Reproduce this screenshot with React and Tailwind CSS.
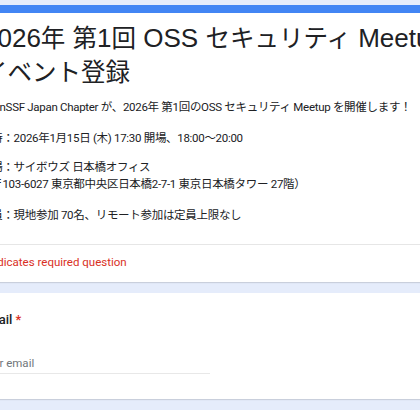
const lines = [
  { text: 'OpenSSF Japan Chapter が、2026年 第1回のOSS セキュリティ Meetup を開催します！', gap: '' },
  { text: '日時：2026年1月15日 (木) 17:30 開場、18:00～20:00', gap: 'mt-[14px]' },
  { text: '会場：サイボウズ 日本橋オフィス', gap: 'mt-[12px]' },
  { text: '（〒103-6027 東京都中央区日本橋2-7-1 東京日本橋タワー 27階）', gap: '' },
  { text: '定員：現地参加 70名、リモート参加は定員上限なし', gap: 'mt-[14px]' },
];

// Japanese glyphs in the title sit a touch smaller than the Latin ones
const Ja = ({ children }) => <span className="text-[24.5px] leading-none">{children}</span>;

export default function App() {
  return (
    <div className="h-[420px] overflow-hidden bg-[#e5ecfb] pt-[5px]">
      <div className="-ml-[44px] w-[620px] flex flex-col gap-[11px]">
        {/* header card */}
        <div className="bg-white border-t-[8px] border-[#4285f4] shadow-[0_1px_1px_rgba(0,0,0,0.12)]">
          <div className="px-6 pt-[8px] pb-[20px]">
            <h1
              className="ml-[3px] text-[26px] leading-[34px] text-[#202124]"
              style={{ fontFamily: '"Liberation Sans", "Noto Sans CJK JP", sans-serif' }}
            >
              2026<Ja>年</Ja> <Ja>第</Ja>1<Ja>回</Ja> OSS <Ja>セキュリティ</Ja> Meetup
              <br />
              <Ja>イベント登録</Ja>
            </h1>
            <div
              className="mt-[10px] text-[11.5px] leading-[17px] tracking-[-0.3px] text-[#202124]"
              style={{ fontFamily: 'Roboto, "Noto Sans CJK JP", sans-serif' }}
            >
              {lines.map((l) => (
                <div key={l.text} className={l.gap}>
                  {l.text}
                </div>
              ))}
            </div>
          </div>
          <div className="h-px bg-[#e6e6e6]" />
          <div
            className="px-6 pt-[8px] pb-[11px] text-[11.5px] leading-[18px] text-[#d93025]"
            style={{ fontFamily: 'Roboto, sans-serif' }}
          >
            * Indicates required question
          </div>
        </div>

        {/* email card */}
        <div
          className="bg-white px-6 pt-[17px] pb-[25px] shadow-[0_1px_1px_rgba(0,0,0,0.12)]"
          style={{ fontFamily: 'Roboto, sans-serif' }}
        >
          <div className="text-[13px] leading-[20px] font-medium text-[#202124]">
            Email <span className="text-[#d93025]">*</span>
          </div>
          <div className="mt-[23px] w-[230px] border-b border-[#e8e8e8] text-[11.5px] leading-[20px] text-[#70757a]">
            Your email
          </div>
        </div>

        {/* next card */}
        <div className="bg-white h-[40px]" />
      </div>
    </div>
  );
}
